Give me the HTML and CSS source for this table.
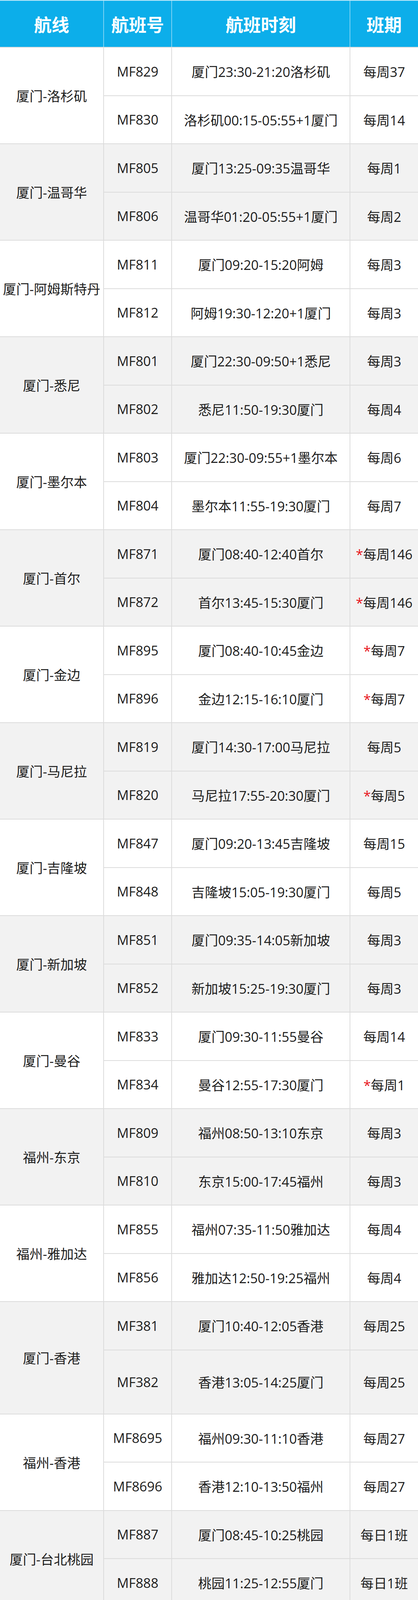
FILE: index.html
```html
<!DOCTYPE html>
<html lang="zh-CN">
<head>
<meta charset="utf-8">
<title>航班时刻表</title>
<link rel="stylesheet" href="styles.css">
</head>
<body>
<table class="sched">
  <colgroup>
    <col class="c-route"><col class="c-no"><col class="c-time"><col class="c-freq">
  </colgroup>
  <thead>
    <tr class="head"><th>航线</th><th>航班号</th><th>航班时刻</th><th>班期</th></tr>
  </thead>
  <tbody class="g w">
    <tr><td rowspan="2" class="route">厦门-洛杉矶</td><td>MF829</td><td>厦门23:30-21:20洛杉矶</td><td>每周37</td></tr>
    <tr><td>MF830</td><td>洛杉矶00:15-05:55+1厦门</td><td>每周14</td></tr>
  </tbody>
  <tbody class="g s">
    <tr><td rowspan="2" class="route">厦门-温哥华</td><td>MF805</td><td>厦门13:25-09:35温哥华</td><td>每周1</td></tr>
    <tr><td>MF806</td><td>温哥华01:20-05:55+1厦门</td><td>每周2</td></tr>
  </tbody>
  <tbody class="g w">
    <tr><td rowspan="2" class="route">厦门-阿姆斯特丹</td><td>MF811</td><td>厦门09:20-15:20阿姆</td><td>每周3</td></tr>
    <tr><td>MF812</td><td>阿姆19:30-12:20+1厦门</td><td>每周3</td></tr>
  </tbody>
  <tbody class="g s">
    <tr><td rowspan="2" class="route">厦门-悉尼</td><td>MF801</td><td>厦门22:30-09:50+1悉尼</td><td>每周3</td></tr>
    <tr><td>MF802</td><td>悉尼11:50-19:30厦门</td><td>每周4</td></tr>
  </tbody>
  <tbody class="g w">
    <tr><td rowspan="2" class="route">厦门-墨尔本</td><td>MF803</td><td>厦门22:30-09:55+1墨尔本</td><td>每周6</td></tr>
    <tr><td>MF804</td><td>墨尔本11:55-19:30厦门</td><td>每周7</td></tr>
  </tbody>
  <tbody class="g s">
    <tr><td rowspan="2" class="route">厦门-首尔</td><td>MF871</td><td>厦门08:40-12:40首尔</td><td><span class="star">*</span>每周146</td></tr>
    <tr><td>MF872</td><td>首尔13:45-15:30厦门</td><td><span class="star">*</span>每周146</td></tr>
  </tbody>
  <tbody class="g w">
    <tr><td rowspan="2" class="route">厦门-金边</td><td>MF895</td><td>厦门08:40-10:45金边</td><td><span class="star">*</span>每周7</td></tr>
    <tr><td>MF896</td><td>金边12:15-16:10厦门</td><td><span class="star">*</span>每周7</td></tr>
  </tbody>
  <tbody class="g s">
    <tr><td rowspan="2" class="route">厦门-马尼拉</td><td>MF819</td><td>厦门14:30-17:00马尼拉</td><td>每周5</td></tr>
    <tr><td>MF820</td><td>马尼拉17:55-20:30厦门</td><td><span class="star">*</span>每周5</td></tr>
  </tbody>
  <tbody class="g w">
    <tr><td rowspan="2" class="route">厦门-吉隆坡</td><td>MF847</td><td>厦门09:20-13:45吉隆坡</td><td>每周15</td></tr>
    <tr><td>MF848</td><td>吉隆坡15:05-19:30厦门</td><td>每周5</td></tr>
  </tbody>
  <tbody class="g s">
    <tr><td rowspan="2" class="route">厦门-新加坡</td><td>MF851</td><td>厦门09:35-14:05新加坡</td><td>每周3</td></tr>
    <tr><td>MF852</td><td>新加坡15:25-19:30厦门</td><td>每周3</td></tr>
  </tbody>
  <tbody class="g w">
    <tr><td rowspan="2" class="route">厦门-曼谷</td><td>MF833</td><td>厦门09:30-11:55曼谷</td><td>每周14</td></tr>
    <tr><td>MF834</td><td>曼谷12:55-17:30厦门</td><td><span class="star">*</span>每周1</td></tr>
  </tbody>
  <tbody class="g s">
    <tr><td rowspan="2" class="route">福州-东京</td><td>MF809</td><td>福州08:50-13:10东京</td><td>每周3</td></tr>
    <tr><td>MF810</td><td>东京15:00-17:45福州</td><td>每周3</td></tr>
  </tbody>
  <tbody class="g w">
    <tr><td rowspan="2" class="route">福州-雅加达</td><td>MF855</td><td>福州07:35-11:50雅加达</td><td>每周4</td></tr>
    <tr><td>MF856</td><td>雅加达12:50-19:25福州</td><td>每周4</td></tr>
  </tbody>
  <tbody class="g s">
    <tr><td rowspan="2" class="route">厦门-香港</td><td>MF381</td><td>厦门10:40-12:05香港</td><td>每周25</td></tr>
    <tr class="tall"><td>MF382</td><td>香港13:05-14:25厦门</td><td>每周25</td></tr>
  </tbody>
  <tbody class="g w">
    <tr><td rowspan="2" class="route">福州-香港</td><td>MF8695</td><td>福州09:30-11:10香港</td><td>每周27</td></tr>
    <tr><td>MF8696</td><td>香港12:10-13:50福州</td><td>每周27</td></tr>
  </tbody>
  <tbody class="g s">
    <tr><td rowspan="2" class="route">厦门-台北桃园</td><td>MF887</td><td>厦门08:45-10:25桃园</td><td>每日1班</td></tr>
    <tr><td>MF888</td><td>桃园11:25-12:55厦门</td><td>每日1班</td></tr>
  </tbody>
  <tbody class="g w tail">
    <tr><td></td><td></td><td></td><td></td></tr>
  </tbody>
</table>
</body>
</html>
```
FILE: styles.css
```css
html, body {
  margin: 0;
  padding: 0;
  background: #ffffff;
}

body {
  font-family: "Open Sans", "Noto Sans CJK SC", sans-serif;
  color: #1c1c1c;
}

.sched {
  width: 1069px;
  border-collapse: collapse;
  table-layout: fixed;
}

.c-route { width: 265px; }
.c-no { width: 174px; }
.c-time { width: 456px; }
.c-freq { width: 174px; }

.head th {
  height: 118px;
  padding: 0;
  background: #0caeea;
  color: #ffffff;
  font-family: "Noto Sans CJK SC", sans-serif;
  font-weight: 700;
  font-size: 45px;
  text-align: center;
  vertical-align: middle;
  border-left: 2px solid #7dd2f3;
  border-top: 2px solid #bfe8f9;
  border-bottom: 2px solid #dcdcdc;
}

.head th:first-child { border-left: none; }

.sched td {
  height: 121.5px;
  padding: 0;
  font-size: 34px;
  text-align: center;
  vertical-align: middle;
  white-space: nowrap;
  border: 2px solid #dcdcdc;
}

.sched td:first-child { border-left: none; }
.sched td:last-child { border-right: none; }

.sched td.route {
  border-left: none;
}

.s td { background: #f2f2f2; }
.w td { background: #ffffff; }

.sched tr.tall td { height: 162px; }

.star {
  color: #e8141b;
}

.tail td {
  height: 20px;
  border-bottom: none;
}
```
